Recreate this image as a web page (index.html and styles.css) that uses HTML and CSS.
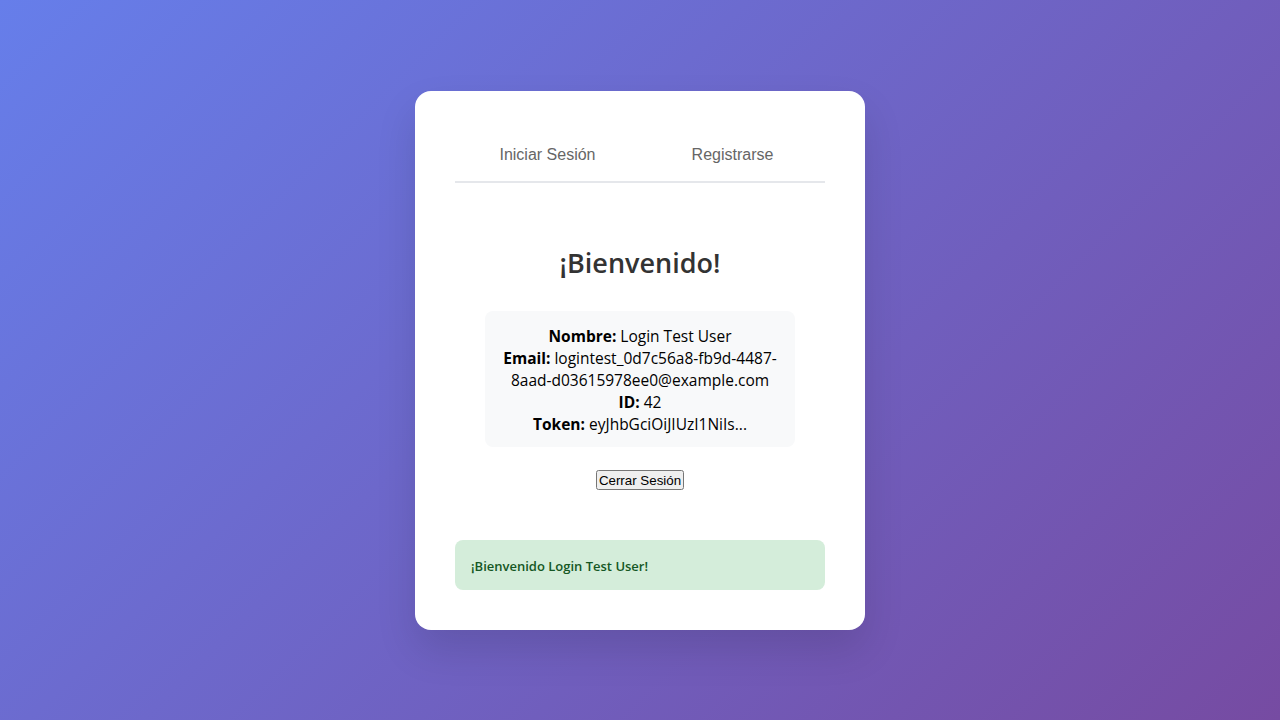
FILE: index.html
```html
<!DOCTYPE html>
<html lang="es">
<head>
<meta charset="utf-8">
<title>Bienvenido</title>
<link rel="stylesheet" href="styles.css">
</head>
<body>
  <main class="card">
    <nav class="tabs">
      <button class="tab">Iniciar Sesión</button>
      <button class="tab">Registrarse</button>
    </nav>
    <section class="welcome">
      <h2 class="title">¡Bienvenido!</h2>
      <div class="info">
        <p><strong>Nombre:</strong> Login Test User</p>
        <p><strong>Email:</strong> <span>logintest_0d7c56a8-fb9d-4487-</span><wbr><span>8aad-d03615978ee0@example.com</span></p>
        <p><strong>ID:</strong> 42</p>
        <p><strong>Token:</strong> eyJhbGciOiJIUzI1NiIs...</p>
      </div>
      <button class="logout">Cerrar Sesión</button>
    </section>
    <div class="alert">¡Bienvenido Login Test User!</div>
  </main>
</body>
</html>
```

FILE: styles.css
```css
html, body {
  margin: 0;
  padding: 0;
}
body {
  min-height: 100vh;
  display: flex;
  align-items: center;
  justify-content: center;
  background: linear-gradient(135deg, #667eea 0%, #764ba2 100%);
  font-family: "Segoe UI", "Open Sans", "Noto Sans", sans-serif;
}
.card {
  width: 450px;
  box-sizing: border-box;
  padding: 40px;
  background: #fff;
  border-radius: 16px;
  box-shadow: 0 20px 40px rgba(0, 0, 0, 0.12);
}
.tabs {
  display: flex;
  border-bottom: 2px solid #e5e7eb;
}
.tab {
  flex: 1;
  background: none;
  border: none;
  padding: 14px 0 16px;
  height: 50px;
  font-family: "Liberation Sans", Arial, sans-serif;
  font-size: 16px;
  color: #666;
  cursor: pointer;
}
.welcome {
  display: flex;
  flex-direction: column;
  align-items: center;
  padding-top: 61px;
}
.title {
  margin: 0;
  font-size: 27px;
  line-height: 37px;
  font-weight: 600;
  color: #333;
}
.info {
  align-self: stretch;
  margin: 30px 30px 0;
  padding: 14px 10px 12px;
  background: #f8f9fa;
  border-radius: 8px;
  text-align: center;
  font-size: 15.5px;
  line-height: 22px;
  color: #000;
}
.info p {
  margin: 0;
}
.info span {
  white-space: nowrap;
}
.info strong {
  font-weight: 700;
}
.logout {
  margin-top: 23px;
  font-family: "Liberation Sans", Arial, sans-serif;
  font-size: 13.33px;
  padding: 1px 1px;
  height: 20px;
}
.alert {
  margin-top: 50px;
  padding: 16px 16px 14px;
  line-height: 20px;
  background: #d4edda;
  color: #155724;
  border-radius: 8px;
  font-size: 13px;
  font-weight: 600;
}
```
